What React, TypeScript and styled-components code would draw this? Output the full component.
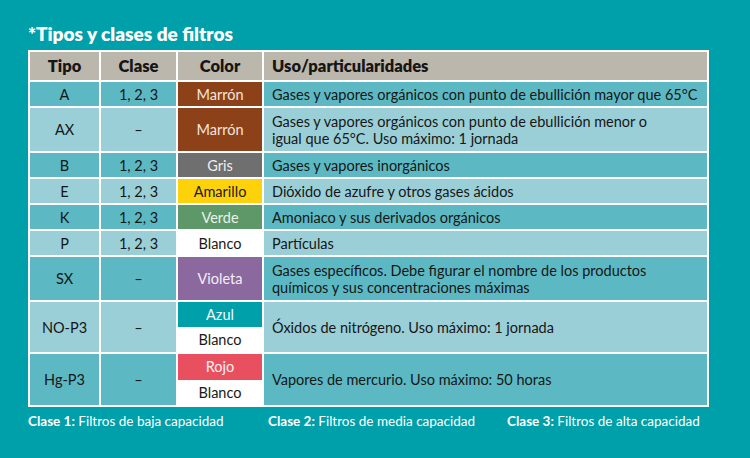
import React from "react";
import styled, { createGlobalStyle } from "styled-components";

const Global = createGlobalStyle`
  html, body { margin: 0; padding: 0; }
  body {
    background: #00a0ab;
    font-family: "Lato", "Noto Sans", sans-serif;
    width: 750px;
    height: 458px;
    overflow: hidden;
  }
`;

const Page = styled.div`
  padding: 22px 41px 0 28px;
  display: flex;
  flex-direction: column;
`;

const Title = styled.h1`
  margin: 0 0 4px 0;
  font-size: 19px;
  line-height: 24px;
  font-weight: 800;
  color: #ffffff;
`;

const Table = styled.div`
  display: flex;
  flex-direction: column;
  gap: 2px;
  background: #ffffff;
  padding: 2px;
  width: 681px;
  box-sizing: border-box;
`;

const Row = styled.div<{ $h: number }>`
  display: grid;
  grid-template-columns: 69px 75px 84px 1fr;
  column-gap: 2px;
  height: ${(p) => p.$h}px;
`;

const toneBg = {
  head: "#bcb7ac",
  dark: "#5cb9c3",
  light: "#9acfd8",
};

const Cell = styled.div<{ $tone: "head" | "dark" | "light"; $left?: boolean }>`
  background: ${(p) => toneBg[p.$tone]};
  display: flex;
  align-items: center;
  justify-content: ${(p) => (p.$left ? "flex-start" : "center")};
  padding: ${(p) => (p.$left ? "0 8px" : "0")};
  font-size: ${(p) => (p.$tone === "head" ? "16.5px" : "14.5px")};
  font-weight: ${(p) => (p.$tone === "head" ? 800 : 400)};
  color: #161616;
  line-height: 17px;
  text-align: ${(p) => (p.$left ? "left" : "center")};
`;

const Swatches = styled.div`
  display: flex;
  flex-direction: column;
`;

const Swatch = styled.div<{ $bg: string; $fg: string }>`
  flex: 1;
  background: ${(p) => p.$bg};
  color: ${(p) => p.$fg};
  display: flex;
  align-items: center;
  justify-content: center;
  font-size: 14.5px;
  line-height: 17px;
`;

const Legend = styled.div`
  display: flex;
  margin-top: 6px;
  font-size: 13.5px;
  line-height: 16px;
  color: #ffffff;
`;

const LegendItem = styled.div<{ $w: number }>`
  width: ${(p) => p.$w}px;
  b { font-weight: 700; }
`;

type Tone = "dark" | "light";
type Sw = { name: string; bg: string; fg: string };

const C = {
  marron: { name: "Marrón", bg: "#8d4119", fg: "#f3e6dc" },
  gris: { name: "Gris", bg: "#6f6f6f", fg: "#eeeeee" },
  amarillo: { name: "Amarillo", bg: "#fdd20a", fg: "#1a1a1a" },
  verde: { name: "Verde", bg: "#5e9868", fg: "#e8f3ea" },
  blanco: { name: "Blanco", bg: "#ffffff", fg: "#1a1a1a" },
  violeta: { name: "Violeta", bg: "#8b699e", fg: "#f3eef6" },
  azul: { name: "Azul", bg: "#00a0ab", fg: "#f0fafb" },
  rojo: { name: "Rojo", bg: "#e8505f", fg: "#fdf0f1" },
};

const rows: { tipo: string; clase: string; colors: Sw[]; uso: React.ReactNode; h: number; tone: Tone }[] = [
  { tipo: "A", clase: "1, 2, 3", colors: [C.marron], uso: "Gases y vapores orgánicos con punto de ebullición mayor que 65°C", h: 24, tone: "dark" },
  { tipo: "AX", clase: "–", colors: [C.marron], uso: <>Gases y vapores orgánicos con punto de ebullición menor o<br />igual que 65°C. Uso máximo: 1 jornada</>, h: 43, tone: "light" },
  { tipo: "B", clase: "1, 2, 3", colors: [C.gris], uso: "Gases y vapores inorgánicos", h: 24, tone: "dark" },
  { tipo: "E", clase: "1, 2, 3", colors: [C.amarillo], uso: "Dióxido de azufre y otros gases ácidos", h: 24, tone: "light" },
  { tipo: "K", clase: "1, 2, 3", colors: [C.verde], uso: "Amoniaco y sus derivados orgánicos", h: 24, tone: "dark" },
  { tipo: "P", clase: "1, 2, 3", colors: [C.blanco], uso: "Partículas", h: 24, tone: "light" },
  { tipo: "SX", clase: "–", colors: [C.violeta], uso: <>Gases específicos. Debe figurar el nombre de los productos<br />químicos y sus concentraciones máximas</>, h: 43, tone: "dark" },
  { tipo: "NO-P3", clase: "–", colors: [C.azul, C.blanco], uso: "Óxidos de nitrógeno. Uso máximo: 1 jornada", h: 50, tone: "light" },
  { tipo: "Hg-P3", clase: "–", colors: [C.rojo, C.blanco], uso: "Vapores de mercurio. Uso máximo: 50 horas", h: 51, tone: "dark" },
];

export default function App() {
  return (
    <>
      <Global />
      <Page>
        <Title>*Tipos y clases de filtros</Title>
        <Table>
          <Row $h={28}>
            <Cell $tone="head">Tipo</Cell>
            <Cell $tone="head">Clase</Cell>
            <Cell $tone="head">Color</Cell>
            <Cell $tone="head" $left>Uso/particularidades</Cell>
          </Row>
          {rows.map((r) => (
            <Row key={r.tipo} $h={r.h}>
              <Cell $tone={r.tone}>{r.tipo}</Cell>
              <Cell $tone={r.tone}>{r.clase}</Cell>
              <Swatches>
                {r.colors.map((c, i) => (
                  <Swatch key={i} $bg={c.bg} $fg={c.fg}>{c.name}</Swatch>
                ))}
              </Swatches>
              <Cell $tone={r.tone} $left>{r.uso}</Cell>
            </Row>
          ))}
        </Table>
        <Legend>
          <LegendItem $w={240}><b>Clase 1:</b> Filtros de baja capacidad</LegendItem>
          <LegendItem $w={239}><b>Clase 2:</b> Filtros de media capacidad</LegendItem>
          <LegendItem $w={200}><b>Clase 3:</b> Filtros de alta capacidad</LegendItem>
        </Legend>
      </Page>
    </>
  );
}
